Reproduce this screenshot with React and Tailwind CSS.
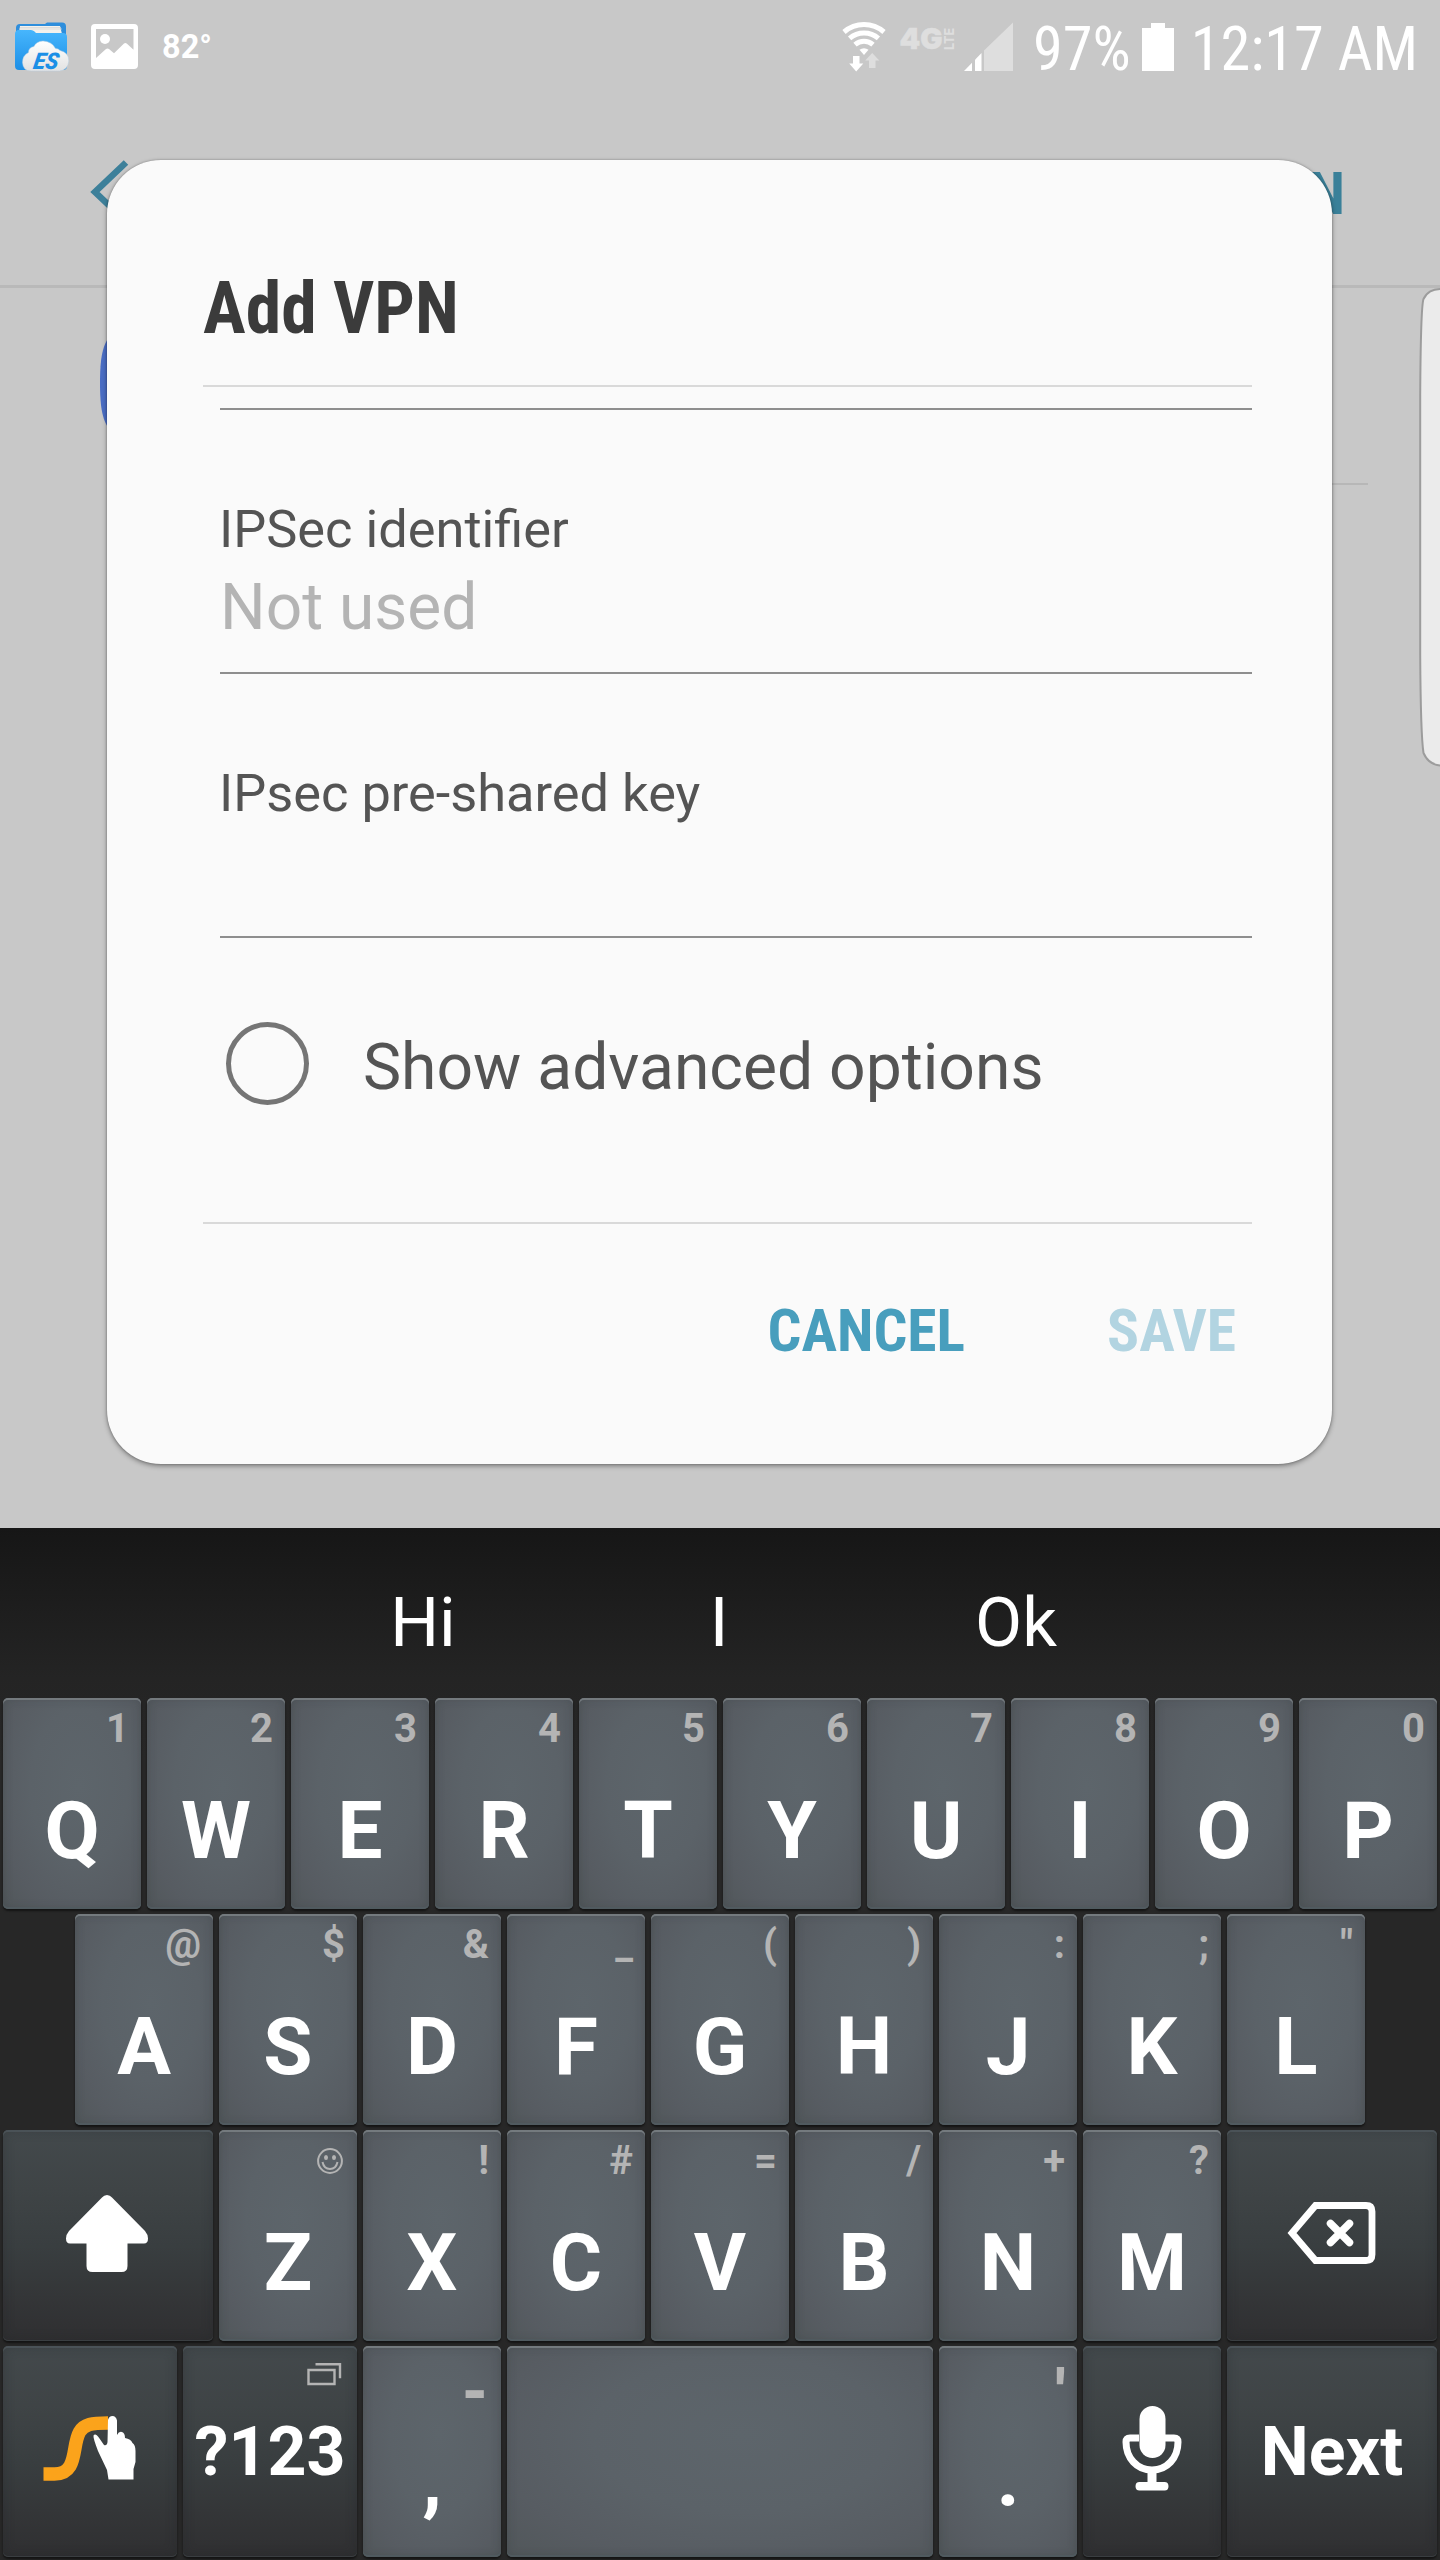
import React from "react";

const LIGHT_KEY =
  "bg-[radial-gradient(ellipse_at_55%_42%,#5d656b_0%,#5b6268_45%,#575c62_75%,#51575a_100%)] shadow-[inset_0_2px_0_#747a7e,inset_0_-2px_0_#505a5f,inset_0_0_10px_rgba(40,46,52,0.25),0_2px_2px_rgba(0,0,0,0.5)]";
const DARK_KEY =
  "bg-[linear-gradient(180deg,#43494c_0%,#3f4446_28%,#393e40_55%,#343638_78%,#2f2f31_100%)] shadow-[inset_0_2px_0_#4a5257,inset_0_-1px_0_#3a3e41,inset_0_0_12px_rgba(30,34,38,0.3),0_2px_2px_rgba(0,0,0,0.5)]";

function Key({ label, hint, bigHint, dark, width = "w-[138px]", children }) {
  return (
    <div className={`relative h-[211px] shrink-0 rounded-[5px] ${width} ${dark ? DARK_KEY : LIGHT_KEY}`}>
      {hint && (
        <div
          className={`absolute leading-none text-[#b4b4b4] ${
            bigHint ? "right-[12px] top-[15px] text-[62px] font-black" : "right-[12px] top-[11px] text-[40px] font-bold"
          }`}
        >
          {hint}
        </div>
      )}
      {label && <div className="pt-[93px] text-center text-[80px] font-bold leading-none text-white">{label}</div>}
      {children}
    </div>
  );
}

function WordKey({ label, width, children }) {
  return (
    <Key dark width={width}>
      <div className="pt-[72px] text-center text-[68px] font-bold leading-none text-white">{label}</div>
      {children}
    </Key>
  );
}

function EsIcon() {
  return (
    <svg className="mt-[21px] h-[52px] w-[56px]" viewBox="0 0 56 52">
      <defs>
        <linearGradient id="folder" x1="0" y1="0" x2="0" y2="1">
          <stop offset="0" stopColor="#47b6fd" />
          <stop offset="1" stopColor="#1d8fe6" />
        </linearGradient>
        <linearGradient id="cloud" x1="0" y1="0" x2="0" y2="1">
          <stop offset="0" stopColor="#ffffff" />
          <stop offset="1" stopColor="#e2e2e2" />
        </linearGradient>
      </defs>
      <path d="M2 12V7q0-4 4-4h25l2-1.500h15q4 0 4 4V14H2z" fill="#2e8edc" />
      <path d="M6 5h40l2 8H5z" fill="#f4f1ec" />
      <path d="M5 8h43M6 6.500h41" stroke="#cfd3d6" strokeWidth="0.700" />
      <path d="M1 13q0-4 4-4h12q2 0 3.500 1.500l1.500 1.500h27q4 0 4 4v29q0 4-4 4H5q-4 0-4-4z" fill="url(#folder)" />
      <path
        d="M17 50q-8 0-8.500-8.500q0-7 6-10q0-5 5.500-6q2-5 9-5.500q9 .500 12.500 7.500q3 0 4.500 2q9 2 8.800 10.500q-.8 9-9.300 10z"
        fill="url(#cloud)"
        stroke="#b9cfe0"
        strokeWidth="0.500"
      />
      <text
        transform="translate(18.5 47.5) skewX(-10)"
        fontSize="23"
        fontWeight="900"
        fontStyle="italic"
        textLength="25"
        lengthAdjust="spacingAndGlyphs"
        fill="#1b8fe6"
      >
        ES
      </text>
    </svg>
  );
}

function PictureIcon() {
  return (
    <svg className="ml-[21px] mt-[24px] h-[45px] w-[47px]" viewBox="0 0 47 45">
      <path
        fillRule="evenodd"
        fill="#fff"
        d="M4 0h39q4 0 4 4v37q0 4-4 4H4q-4 0-4-4V4q0-4 4-4zM5 5v29l10-9q1.500-1.200 3 0l5 4.200L33 19.500q1.500-1 3 .200l6.500 6V5z"
      />
      <circle cx="14" cy="15" r="5" fill="#fff" />
    </svg>
  );
}

function WifiIcon() {
  return (
    <svg className="mt-[20px] h-[52px] w-[44px]" viewBox="0 0 44 52">
      <g fill="none" stroke="#fff" strokeWidth="5">
        <path d="M2 12a30.500 30.500 0 0 1 40 0" />
        <path d="M7.600 18.400a22 22 0 0 1 28.800 0" />
        <path d="M13 24.700a13.700 13.700 0 0 1 18 0" />
      </g>
      <path d="M17.500 29.800a7 7 0 0 1 9 0L22 35z" fill="#fff" />
      <path d="M11 36h6.500v7.500h3.800L14.200 51.500 7.200 43.500H11z" fill="#fff" />
      <path d="M27 48h6.500v-7.500h3.800L30.200 33l-7 7.500H27z" fill="#dedede" />
    </svg>
  );
}

function LteIcon() {
  return (
    <svg
      className="ml-[13px] mt-[22px] h-[34px] w-[60px] overflow-visible"
      viewBox="0 0 60 34"
      fill="#dedede"
      stroke="#dedede"
      fontFamily="Inter, sans-serif"
    >
      <text x="0.5" y="27" fontSize="28.500" fontWeight="900" strokeWidth="0.500" textLength="43" lengthAdjust="spacingAndGlyphs">
        4G
      </text>
      <text transform="translate(54.5 28) rotate(-90)" fontSize="13" fontWeight="800" strokeWidth="0" textLength="22" lengthAdjust="spacingAndGlyphs">
        LTE
      </text>
    </svg>
  );
}

function SignalIcon() {
  return (
    <svg className="ml-[5px] mt-[22px] h-[49px] w-[49px]" viewBox="0 0 49 49">
      <path d="M0 49l8-8.200V49z" fill="#fff" />
      <path d="M11 49V37.800l6.500-6.800V49z" fill="#fff" />
      <path d="M20 49V28.500L49 .500V49z" fill="#dedede" />
    </svg>
  );
}

function StatusBar() {
  return (
    <div className="flex h-[96px] items-start pl-[14px] text-white">
      <EsIcon />
      <PictureIcon />
      <div className="ml-[24px] mt-[31px] text-[32.5px] font-bold leading-none">82°</div>
      <div className="ml-auto flex items-start pr-[22px] font-['Roboto_Condensed'] text-[60.3px] leading-[60px]">
        <WifiIcon />
        <LteIcon />
        <SignalIcon />
        <span className="ml-[20px] mt-[20px]">97%</span>
        <svg className="ml-[11px] mt-[23px] h-[48px] w-[32px]" viewBox="0 0 32 48">
          <path d="M9 0h14v5h9v43H0V5h9z" fill="#fff" />
        </svg>
        <span className="ml-[17px] mt-[20px]">12:17 AM</span>
      </div>
    </div>
  );
}

function Background() {
  return (
    <div className="flex h-full flex-col">
      <StatusBar />
      <div className="flex h-[192px] items-start justify-between border-b-[3px] border-[#b9b9b9] pl-[90px] pr-[95px]">
        <svg className="mt-[64px] h-[64px] w-[40px]" viewBox="0 0 40 64">
          <path d="M36 2.500L5 32 36 61.500" fill="none" stroke="#3d809a" strokeWidth="6.500" />
        </svg>
        <div className="mt-[68px] font-['Roboto_Condensed'] text-[60px] font-bold leading-none text-[#3a8099]">N</div>
      </div>
      <div className="flex h-[197px] items-start pl-[100px] pr-[72px]">
        <svg className="mt-[36px] h-[118px] w-[118px]" viewBox="0 0 96 96">
          <path d="M48 0C8 0 0 8 0 48s8 48 48 48 48-8 48-48S88 0 48 0z" fill="#4a6dc4" />
        </svg>
        <div className="ml-[30px] h-full flex-1 border-b-2 border-[#b7b7b7]" />
      </div>
    </div>
  );
}

function EdgeHandle() {
  return (
    <svg className="absolute right-0 top-[285px] h-[484px] w-[22px]" viewBox="0 0 22 484">
      <path
        d="M24 4C14 4 9 7 5.500 14C3.500 20 2.500 60 2.200 110V370C2.500 420 3 452 5.500 468C9 476 14 480.500 24 480.500"
        fill="#ebebeb"
        stroke="#9c9c9c"
        strokeWidth="2"
      />
    </svg>
  );
}

function Dialog() {
  return (
    <div className="absolute left-[107px] top-[160px] flex h-[1304px] w-[1225px] flex-col rounded-[54px] bg-[#fafafa] pl-[96px] pr-[80px] pt-[113px] shadow-[0_2px_5px_rgba(0,0,0,0.38),0_0_2px_rgba(0,0,0,0.3)]">
      <h1 className="font-['Roboto_Condensed'] text-[71.5px] font-bold leading-[72px] text-[#3b3b3b]">Add VPN</h1>
      <div className="mt-[40px] h-[2px] bg-[#d9d9d9]" />
      <div className="ml-[17px] mt-[21px] h-[2px] bg-[#8e8e8e]" />

      <label className="ml-[16px] mt-[93px] h-[52px] text-[52.35px] leading-[52px] text-[#545454]">IPSec identifier</label>
      <div className="ml-[17px] mt-[20px] h-[65px] text-[64px] leading-[65px] text-[#b4b4b4]">Not used</div>
      <div className="ml-[17px] mt-[32px] h-[2px] bg-[#8e8e8e]" />

      <label className="ml-[16px] mt-[93px] h-[52px] text-[52.35px] leading-[52px] text-[#545454]">IPsec pre-shared key</label>
      <div className="ml-[17px] mt-[117px] h-[2px] bg-[#8e8e8e]" />

      <div className="ml-[23px] mt-[83px] flex h-[84px] items-center">
        <div className="size-[83px] rounded-full border-[5px] border-[#757575]" />
        <div className="ml-[54px] pt-[7px] text-[64.2px] leading-[64px] text-[#545454]">Show advanced options</div>
      </div>

      <div className="mt-[117px] h-[2px] bg-[#d9d9d9]" />
      <div className="mt-[77px] flex justify-end gap-[142px] pr-[16px] font-['Roboto_Condensed'] text-[59.5px] font-bold leading-[60px]">
        <span className="text-[#489ebd]">CANCEL</span>
        <span className="text-[#b2d4e1]">SAVE</span>
      </div>
    </div>
  );
}

const ROW1 = [["Q", "1"], ["W", "2"], ["E", "3"], ["R", "4"], ["T", "5"], ["Y", "6"], ["U", "7"], ["I", "8"], ["O", "9"], ["P", "0"]];
const ROW2 = [["A", "@"], ["S", "$"], ["D", "&"], ["F", "_"], ["G", "("], ["H", ")"], ["J", ":"], ["K", ";"], ["L", '"']];
const ROW3 = [["X", "!"], ["C", "#"], ["V", "="], ["B", "/"], ["N", "+"], ["M", "?"]];

function Keyboard() {
  return (
    <div className="flex h-[1032px] flex-col bg-[linear-gradient(180deg,#161616_0px,#242424_150px,#272727_230px,#272727_100%)]">
      <div className="flex h-[170px] justify-center pt-[61px] text-[68.5px] leading-none text-white">
        <span className="w-[296px] text-center">Hi</span>
        <span className="w-[296px] text-center">I</span>
        <span className="w-[298px] text-center">Ok</span>
      </div>
      <div className="flex flex-col gap-[5px]">
        <div className="flex justify-center gap-[6px]">
          {ROW1.map(([k, h]) => <Key key={k} label={k} hint={h} />)}
        </div>
        <div className="flex justify-center gap-[6px]">
          {ROW2.map(([k, h]) => <Key key={k} label={k} hint={h} />)}
        </div>
        <div className="flex justify-center gap-[6px]">
          <Key dark width="w-[210px]">
            <svg className="ml-[63px] mt-[65px] h-[77px] w-[82px]" viewBox="0 0 82 77">
              <path
                d="M41 0q3 0 5 2.500L79 36q3 3.500 3 7.500 0 5-4 5H61.500V71q0 6-6 6h-29q-6 0-6-6V48.500H4q-4 0-4-5Q0 39.500 3 36L36 2.500Q38 0 41 0z"
                fill="#fff"
              />
            </svg>
          </Key>
          <Key label="Z">
            <svg className="absolute right-[14px] top-[18px] size-[26px]" viewBox="0 0 26 26" fill="none" stroke="#b4b4b4" strokeWidth="2">
              <circle cx="13" cy="13" r="11.900" />
              <ellipse cx="9" cy="9.500" rx="2" ry="2.500" fill="#b4b4b4" stroke="none" />
              <ellipse cx="17" cy="9.500" rx="2" ry="2.500" fill="#b4b4b4" stroke="none" />
              <path d="M5.500 14q1.500 7 7.500 7t7.500-7" />
            </svg>
          </Key>
          {ROW3.map(([k, h]) => <Key key={k} label={k} hint={h} />)}
          <Key dark width="w-[210px]">
            <svg className="ml-[60px] mt-[72px] h-[62px] w-[89px]" viewBox="0 0 89 62" fill="none" stroke="#fff" strokeWidth="6.800">
              <path d="M28.500 3.500H79q6 0 6 6v43q0 6-6 6H28.500L5 31z" />
              <path d="M43.500 21.500l19 19M62.500 21.500l-19 19" strokeWidth="7.500" strokeLinecap="round" />
            </svg>
          </Key>
        </div>
        <div className="flex justify-center gap-[6px]">
          <Key dark width="w-[174px]">
            <svg className="ml-[40px] mt-[70px] h-[66px] w-[94px]" viewBox="0 0 94 66">
              <path d="M0.500 58h11c24 0 17-28 25-42C41 8 49 7 65 7" fill="none" stroke="#fba31b" strokeWidth="13.500" />
              <path
                d="M65 4q1-4 4.500-4T74 4.500V19q2-4 5-3 3 1 3 6 6 1 7.500 5 3 2 3 8v11l-2 7V63.500H65.500L64 54 55 35Q50 22 50.500 19.500q2-3 6 3L61 29q3 1 3.500-3z"
                fill="#fff"
              />
            </svg>
          </Key>
          <WordKey label="?123" width="w-[174px]">
            <svg className="absolute right-[15px] top-[16px] h-[24px] w-[35px]" viewBox="0 0 35 24" fill="none" stroke="#b4b4b4" strokeWidth="2.400">
              <path d="M1.500 8h26v14h-26z" />
              <path d="M8.500 2.200h24.500v14" />
            </svg>
          </WordKey>
          <Key label="," hint="-" bigHint />
          <Key width="w-[426px]" />
          <Key label="." hint="'" bigHint />
          <Key dark>
            <svg className="mx-auto mt-[60px] h-[85px] w-[60px]" viewBox="0 0 60 85">
              <rect x="17.500" y="0" width="26" height="52" rx="13" fill="#fff" />
              <path d="M17 32H8Q4 32 4 36C4 52 15 64 30 64S56 52 56 36Q56 32 52 32H43" fill="none" stroke="#fff" strokeWidth="7" />
              <path d="M25.500 64h9v12h8q4 0 4 4.300T42.500 84.500h-25q-4 0-4-4.200T17.500 76h8z" fill="#fff" />
            </svg>
          </Key>
          <WordKey label="Next" width="w-[210px]" />
        </div>
      </div>
    </div>
  );
}

export default function App() {
  return (
    <div className="flex h-[2560px] w-[1440px] flex-col overflow-hidden bg-[#c8c8c8] font-['Roboto',sans-serif]">
      <div className="relative h-[1528px]">
        <Background />
        <EdgeHandle />
        <Dialog />
      </div>
      <Keyboard />
    </div>
  );
}
